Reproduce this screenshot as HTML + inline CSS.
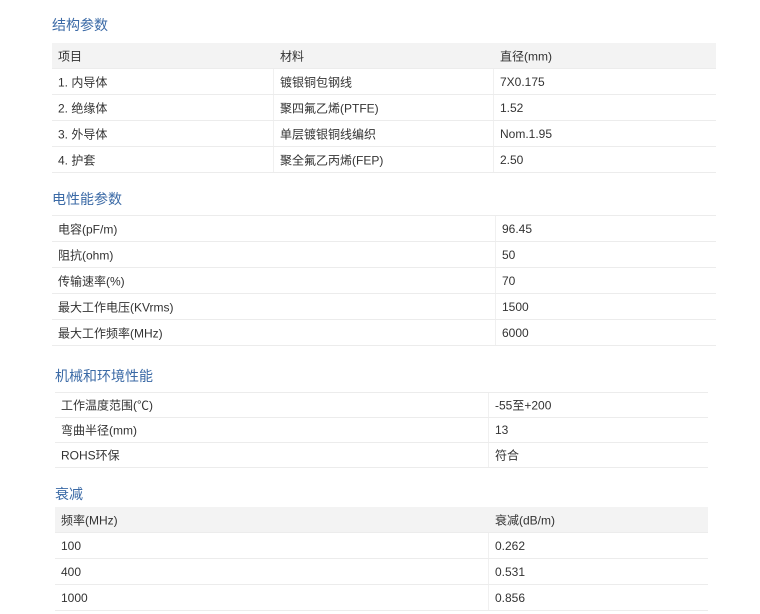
<!DOCTYPE html>
<html><head><meta charset="utf-8"><style>
*{margin:0;padding:0;box-sizing:border-box}
body{width:760px;height:614px;background:#fff;font-family:"Liberation Sans","Noto Sans CJK SC",sans-serif;color:#333;font-size:12px;position:relative;overflow:hidden}
.t{position:absolute;color:#3b6aa6;font-size:14px}
.tb{position:absolute}
.r{position:relative;height:26px;border-bottom:1px solid #ececec;display:flex;align-items:center}
.r.h{background:#f3f3f3}
.r span{position:absolute;top:50%;transform:translateY(-50%);white-space:nowrap}
.d{position:absolute;top:0;bottom:0;width:1px;background:#f0f0f0}
</style></head><body>
<div class="t" style="left:52px;top:15px">结构参数</div>
<div class="tb" style="left:52px;top:43px;width:664px">
<div class="r h"><span style="left:6px">项目</span><span style="left:228px">材料</span><span style="left:448px">直径(mm)</span></div>
<div class="r"><div class="d" style="left:221px"></div><div class="d" style="left:441px"></div><span style="left:6px">1. 内导体</span><span style="left:228px">镀银铜包钢线</span><span style="left:448px">7X0.175</span></div>
<div class="r"><div class="d" style="left:221px"></div><div class="d" style="left:441px"></div><span style="left:6px">2. 绝缘体</span><span style="left:228px">聚四氟乙烯(PTFE)</span><span style="left:448px">1.52</span></div>
<div class="r"><div class="d" style="left:221px"></div><div class="d" style="left:441px"></div><span style="left:6px">3. 外导体</span><span style="left:228px">单层镀银铜线编织</span><span style="left:448px">Nom.1.95</span></div>
<div class="r"><div class="d" style="left:221px"></div><div class="d" style="left:441px"></div><span style="left:6px">4. 护套</span><span style="left:228px">聚全氟乙丙烯(FEP)</span><span style="left:448px">2.50</span></div>
</div>
<div class="t" style="left:52px;top:189px">电性能参数</div>
<div class="tb" style="left:52px;top:215px;width:664px;border-top:1px solid #ececec">
<div class="r"><div class="d" style="left:443px"></div><span style="left:6px">电容(pF/m)</span><span style="left:450px">96.45</span></div>
<div class="r"><div class="d" style="left:443px"></div><span style="left:6px">阻抗(ohm)</span><span style="left:450px">50</span></div>
<div class="r"><div class="d" style="left:443px"></div><span style="left:6px">传输速率(%)</span><span style="left:450px">70</span></div>
<div class="r"><div class="d" style="left:443px"></div><span style="left:6px">最大工作电压(KVrms)</span><span style="left:450px">1500</span></div>
<div class="r"><div class="d" style="left:443px"></div><span style="left:6px">最大工作频率(MHz)</span><span style="left:450px">6000</span></div>
</div>
<div class="t" style="left:55px;top:366px">机械和环境性能</div>
<div class="tb" style="left:55px;top:392px;width:653px;border-top:1px solid #ececec">
<div class="r" style="height:25px"><div class="d" style="left:433px"></div><span style="left:6px">工作温度范围(℃)</span><span style="left:440px">-55至+200</span></div>
<div class="r" style="height:25px"><div class="d" style="left:433px"></div><span style="left:6px">弯曲半径(mm)</span><span style="left:440px">13</span></div>
<div class="r" style="height:25px"><div class="d" style="left:433px"></div><span style="left:6px">ROHS环保</span><span style="left:440px">符合</span></div>
</div>
<div class="t" style="left:55px;top:484px">衰减</div>
<div class="tb" style="left:55px;top:507px;width:653px">
<div class="r h"><span style="left:6px">频率(MHz)</span><span style="left:440px">衰减(dB/m)</span></div>
<div class="r"><div class="d" style="left:433px"></div><span style="left:6px">100</span><span style="left:440px">0.262</span></div>
<div class="r"><div class="d" style="left:433px"></div><span style="left:6px">400</span><span style="left:440px">0.531</span></div>
<div class="r"><div class="d" style="left:433px"></div><span style="left:6px">1000</span><span style="left:440px">0.856</span></div>
</div>
</body></html>
